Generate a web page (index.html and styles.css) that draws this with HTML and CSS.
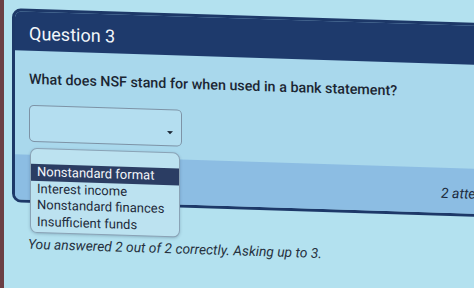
FILE: index.html
```html
<!DOCTYPE html>
<html lang="en">
<head>
  <meta charset="UTF-8">
  <meta name="viewport" content="width=device-width, initial-scale=1.0">
  <title>Question 3</title>
  <link rel="stylesheet" href="styles.css">
</head>
<body>
  <div class="screen">
    <div class="card">
      <div class="card-header">Question 3</div>
      <div class="card-body">
        <p class="question">What does NSF stand for when used in a bank statement?</p>
        <div class="select-wrap">
          <div class="select"><span class="caret"></span></div>
          <ul class="options">
            <li class="selected">Nonstandard format</li>
            <li>Interest income</li>
            <li>Nonstandard finances</li>
            <li>Insufficient funds</li>
          </ul>
        </div>
      </div>
      <div class="card-footer">2 attempts left</div>
    </div>
    <p class="status">You answered 2 out of 2 correctly. Asking up to 3.</p>
  </div>
</body>
</html>
```

FILE: styles.css
```css
html, body {
    margin: 0;
    height: 100%;
    overflow: hidden;
}
body {
    background: #b3e1ef;
    border-left: 4px solid #6b3f44;
    font-family: Roboto, "Liberation Sans", Arial, sans-serif;
    color: #1b2633;
}
.screen {
    transform: skewY(1.8deg);
    transform-origin: 0 0;
    padding: 8px 0 0 8px;
}
.card {
    width: 620px;
    border: 3px solid #1d3868;
    border-radius: 9px;
    background: #a9d8ec;
}
.card-header {
    background: #1e3a6c;
    color: #f2f6fa;
    font-size: 18px;
    height: 39px;
    line-height: 44px;
    padding-left: 14px;
    border-radius: 6px 6px 0 0;
}
.card-body {
    padding: 19px 0 13px 14px;
}
.question {
    margin: 0 0 17px 0;
    font-size: 14.3px;
    font-weight: 500;
    line-height: 18px;
}
.select-wrap {
    position: relative;
    width: 153px;
}
.select {
    height: 35px;
    border: 1px solid #7d93a6;
    border-radius: 5px;
    background: #b4def0;
    position: relative;
}
.caret {
    position: absolute;
    right: 8px;
    top: 21px;
    border-left: 3px solid transparent;
    border-right: 3px solid transparent;
    border-top: 3px solid #1b2633;
}
.options {
    position: absolute;
    z-index: 2;
    top: 43px;
    left: 1px;
    width: 148px;
    margin: 0;
    padding: 15px 0 2px 0;
    list-style: none;
    background: #bce2f0;
    border: 1px solid #8aa3b6;
    border-radius: 7px;
    box-shadow: 0 1px 3px rgba(30, 50, 80, 0.25);
    font-size: 13px;
    line-height: 16.5px;
    color: #1c2a3a;
}
.options li {
    padding-left: 6px;
}
.options li.selected {
    background: #2b3d63;
    color: #f3f6fa;
}
.card-footer {
    background: #8cbde3;
    height: 45px;
    line-height: 50px;
    padding-left: 426px;
    font-style: italic;
    font-size: 14px;
    color: #1b2a3d;
    border-radius: 0 0 6px 6px;
}
.status {
    margin: 33px 0 0 16px;
    font-style: italic;
    font-size: 13.8px;
    color: #26313e;
}
```
